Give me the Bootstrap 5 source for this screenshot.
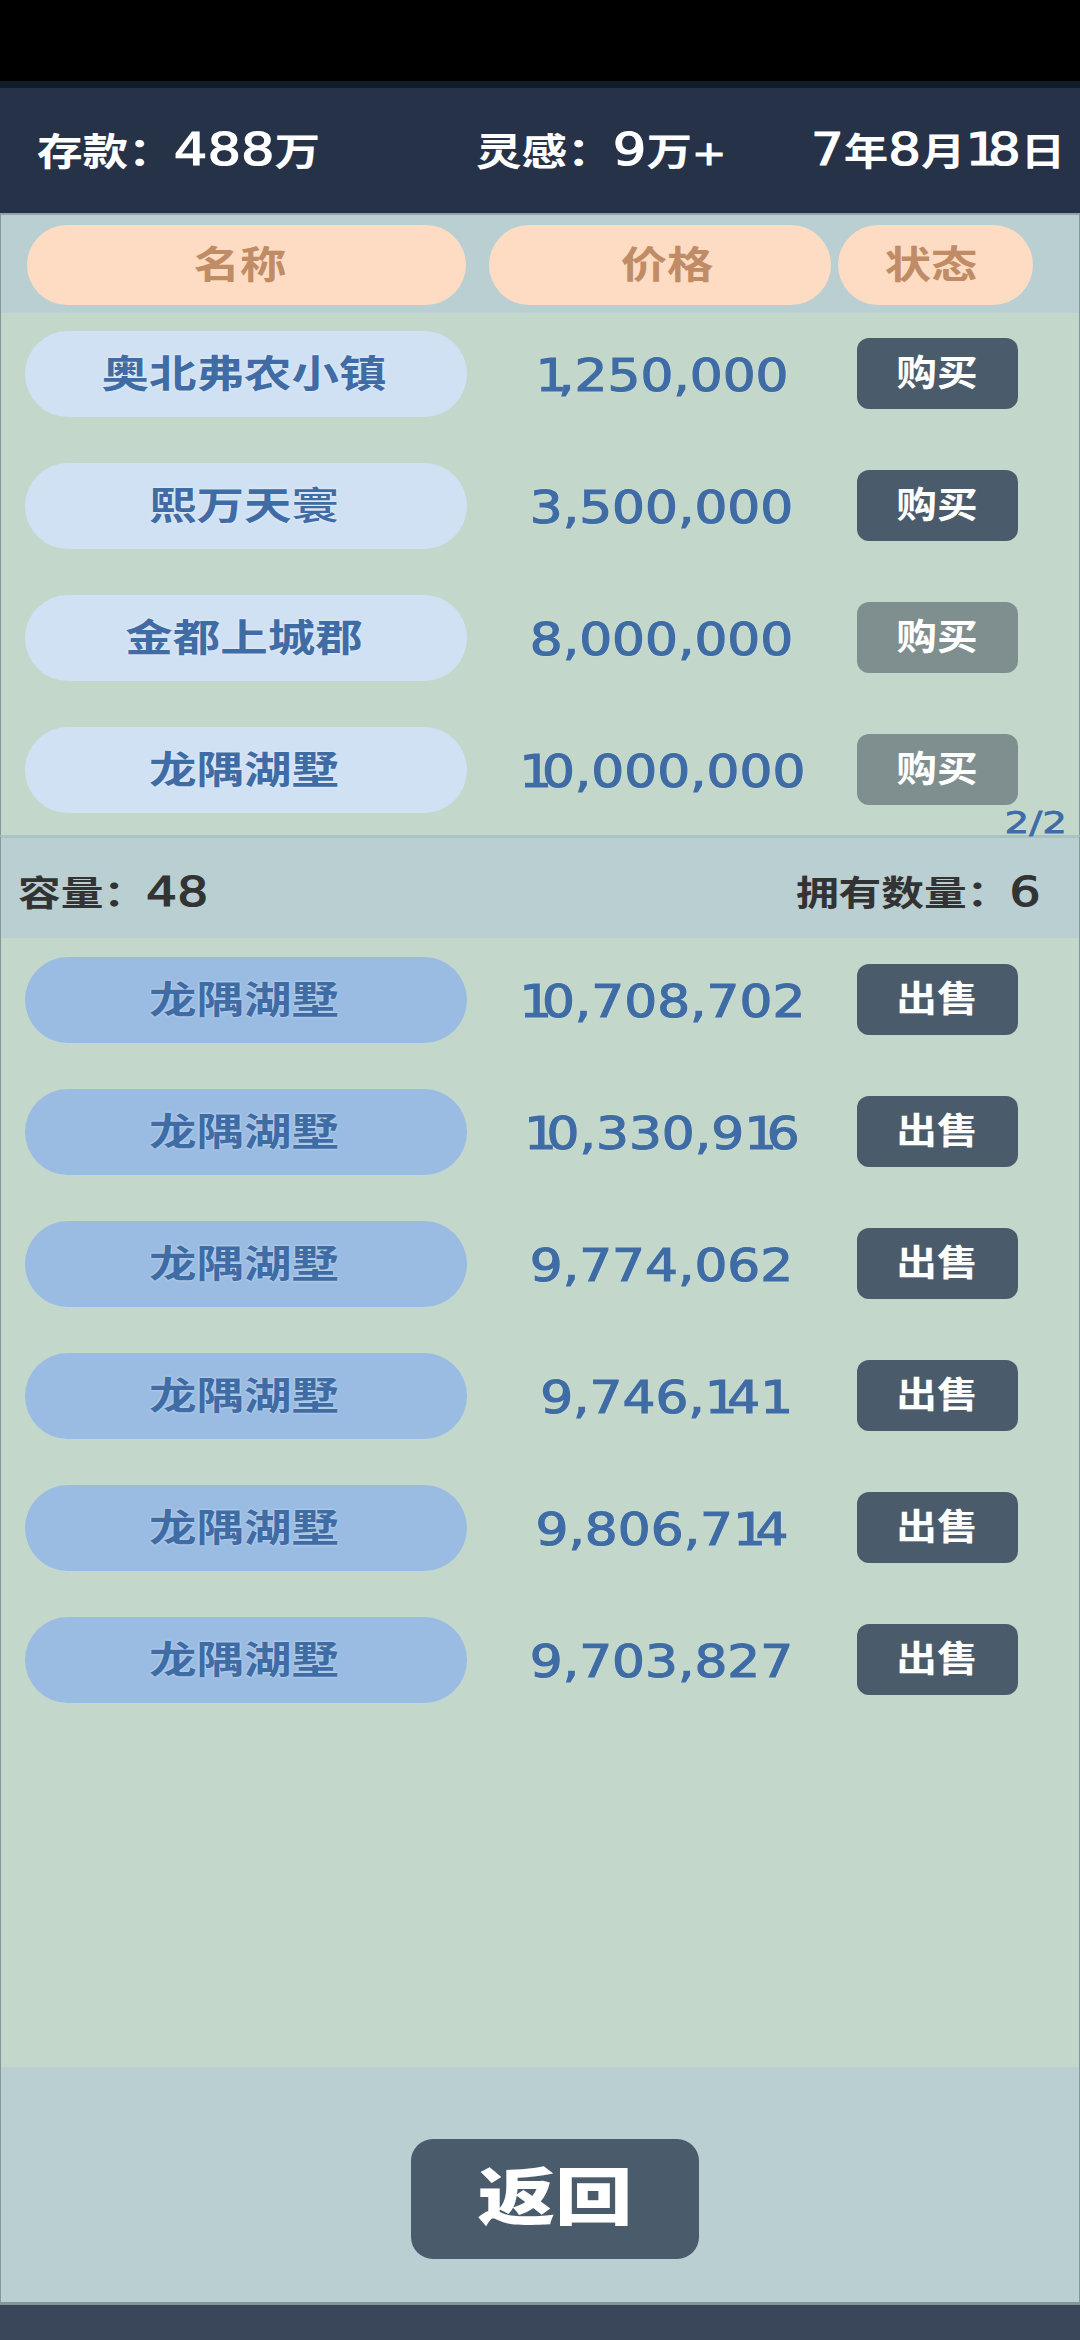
<!DOCTYPE html>
<html lang="zh">
<head>
<meta charset="UTF-8">
<title>房产</title>
<link href="https://cdn.jsdelivr.net/npm/bootstrap@5.3.0/dist/css/bootstrap.min.css" rel="stylesheet">
<style>
html, body { background: #000; }
#app { width: 1080px; height: 2340px; font-family: "DejaVu Sans", "Noto Sans CJK SC", sans-serif; font-weight: 700; overflow: hidden; }
.top-black { height: 81px; background: #000; }
.top-bar { height: 132px; background: #263248; color: #fff; border-top: 7px solid #0f1d2a; padding-top: 40px; }
.top-bar .wide { transform: scaleX(1.2); }
.top-bar .cell-c .wide { transform: scaleX(1.17); }
.wide { display: inline-block; transform: scaleX(1.22); transform-origin: left center; white-space: nowrap; line-height: 1; }
.wide-c { transform-origin: center; }
.num { font-weight: 400; font-size: 44px; -webkit-text-stroke: 1.2px currentColor; }
.plus { font-size: 34px; }
.hz { font-size: 38px; }
.one { letter-spacing: -.2em; }
.cell-a { width: 476px; padding-left: 37px; }
.cell-b { width: 335px; }
.cell-c { flex: 1; }
.head-strip { height: 100px; background: #b9cfd2; padding: 10px 0 0 26px; gap: 23px; border: 1px solid #7f9a9a; border-top: 2px solid #8fa5a8; border-bottom: 0; }
.head-pill { height: 80px; background: #fddcc3; color: #c08c66; border-radius: 40px; font-size: 38px; }
.head-pill .wide { transform: scaleX(1.22); }
.hp1 { width: 439px; padding-right: 12px; }
.hp2 { width: 342px; margin-right: -16px; padding-left: 14px; }
.hp3 { width: 195px; padding-right: 8px; }
.list-box { background: #c3d7cb; position: relative; border-left: 1px solid #7f9a9a; border-right: 1px solid #7f9a9a; }
.list-a { height: 522px; padding-top: 18px; }
.list-b { height: 1129px; padding-top: 19px; }
.item-row { height: 132px; padding-left: 24px; }
.name-pill { width: 442px; height: 86px; border-radius: 43px; color: #3f6ca5; font-size: 38px; padding-right: 4px; text-shadow: 0 0 2px rgba(255,255,255,.7); }
.name-pill .wide { transform: scaleX(1.25); }
.pill-new { background: #d1e1f4; }
.pill-own { background: #9abce2; }
.price { width: 390px; padding-top: 22px; text-align: center; color: #3f6ca5; text-shadow: 0 0 2px rgba(255,255,255,.7); }
.price .wide { font-size: 45px; font-weight: 400; -webkit-text-stroke: 1.2px #3f6ca5; transform: scaleX(1.15); transform-origin: center; }
.act-btn { width: 161px; height: 71px; margin-top: 7px; --bs-btn-bg: #4a5b6b; --bs-btn-border-width: 0; --bs-btn-color: #fff; --bs-btn-border-radius: 12px; --bs-btn-padding-x: 0; --bs-btn-padding-y: 0; --bs-btn-font-weight: 700; --bs-btn-disabled-bg: #7f8f8f; --bs-btn-disabled-color: #fff; --bs-btn-disabled-opacity: 1; font-size: 36px; font-family: inherit; }
.act-btn .wide { transform: scaleX(1.13); }
.page-no { position: absolute; right: 12px; bottom: -3px; color: #3f6ca5; font-size: 31px; font-weight: 400; line-height: 1; text-shadow: 0 0 2px rgba(255,255,255,.7); -webkit-text-stroke: .8px #3f6ca5; transform: scaleX(1.25); transform-origin: right center; }
.mid-strip { height: 103px; background: #b9cfd2; color: #333; border-top: 3px solid #a9c2c2; padding: 8px 39px 0 17px; border-left: 1px solid #7f9a9a; border-right: 1px solid #7f9a9a; }
.mid-strip .wide { transform: scaleX(1.22); }
.mid-strip .hz { font-size: 35px; }
.mid-strip .num { font-size: 40px; }
.mid-strip .mid-right { transform-origin: right center; }
.foot-strip { height: 238px; background: #b9cfd2; padding-top: 72px; border-left: 1px solid #7f9a9a; border-right: 1px solid #7f9a9a; border-bottom: 3px solid #83979a; }
.back-btn { width: 288px; height: 120px; --bs-btn-bg: #4a5b6b; --bs-btn-border-width: 0; --bs-btn-color: #fff; --bs-btn-border-radius: 22px; --bs-btn-padding-x: 0; --bs-btn-padding-y: 0; font-size: 62px; font-weight: 900; font-family: inherit; margin-left: 410px; line-height: 1; }
.back-btn .wide { transform: scaleX(1.25); }
.foot-dark { height: 35px; background: #3a4659; }
.thin { font-weight: 500; }
</style>
</head>
<body class="m-0">
<div id="app">
  <div class="top-black"></div>

  <div class="top-bar d-flex">
    <div class="cell-a"><span class="wide"><span class="hz">存款：</span><span class="num">488</span><span class="hz">万</span></span></div>
    <div class="cell-b"><span class="wide"><span class="hz">灵感：</span><span class="num">9</span><span class="hz">万</span><span class="num plus">+</span></span></div>
    <div class="cell-c"><span class="wide"><span class="num">7</span><span class="hz">年</span><span class="num">8</span><span class="hz">月</span><span class="num"><span class="one">1</span>8</span><span class="hz">日</span></span></div>
  </div>

  <div class="head-strip d-flex">
    <div class="head-pill hp1 d-flex align-items-center justify-content-center"><span class="wide wide-c">名称</span></div>
    <div class="head-pill hp2 d-flex align-items-center justify-content-center"><span class="wide wide-c">价格</span></div>
    <div class="head-pill hp3 d-flex align-items-center justify-content-center"><span class="wide wide-c">状态</span></div>
  </div>

  <div class="list-box list-a">
    <div class="item-row d-flex">
      <div class="name-pill pill-new d-flex align-items-center justify-content-center"><span class="wide wide-c">奥北弗农小镇</span></div>
      <div class="price"><span class="wide"><span class="one">1</span>,250,000</span></div>
      <div><button class="btn act-btn" type="button"><span class="wide wide-c">购买</span></button></div>
    </div>
    <div class="item-row d-flex">
      <div class="name-pill pill-new d-flex align-items-center justify-content-center"><span class="wide wide-c">熙万天<span class="thin">寰</span></span></div>
      <div class="price"><span class="wide">3,500,000</span></div>
      <div><button class="btn act-btn" type="button"><span class="wide wide-c">购买</span></button></div>
    </div>
    <div class="item-row d-flex">
      <div class="name-pill pill-new d-flex align-items-center justify-content-center"><span class="wide wide-c">金都上城郡</span></div>
      <div class="price"><span class="wide">8,000,000</span></div>
      <div><button class="btn act-btn" type="button" disabled><span class="wide wide-c">购买</span></button></div>
    </div>
    <div class="item-row d-flex">
      <div class="name-pill pill-new d-flex align-items-center justify-content-center"><span class="wide wide-c">龙隅湖墅</span></div>
      <div class="price"><span class="wide"><span class="one">1</span>0,000,000</span></div>
      <div><button class="btn act-btn" type="button" disabled><span class="wide wide-c">购买</span></button></div>
    </div>
    <div class="page-no">2/2</div>
  </div>

  <div class="mid-strip d-flex align-items-center justify-content-between">
    <span class="wide"><span class="hz">容量：</span><span class="num">48</span></span>
    <span class="wide mid-right"><span class="hz">拥有数量：</span><span class="num">6</span></span>
  </div>

  <div class="list-box list-b">
    <div class="item-row d-flex">
      <div class="name-pill pill-own d-flex align-items-center justify-content-center"><span class="wide wide-c">龙隅湖墅</span></div>
      <div class="price"><span class="wide"><span class="one">1</span>0,708,702</span></div>
      <div><button class="btn act-btn" type="button"><span class="wide wide-c">出售</span></button></div>
    </div>
    <div class="item-row d-flex">
      <div class="name-pill pill-own d-flex align-items-center justify-content-center"><span class="wide wide-c">龙隅湖墅</span></div>
      <div class="price"><span class="wide"><span class="one">1</span>0,330,9<span class="one">1</span>6</span></div>
      <div><button class="btn act-btn" type="button"><span class="wide wide-c">出售</span></button></div>
    </div>
    <div class="item-row d-flex">
      <div class="name-pill pill-own d-flex align-items-center justify-content-center"><span class="wide wide-c">龙隅湖墅</span></div>
      <div class="price"><span class="wide">9,774,062</span></div>
      <div><button class="btn act-btn" type="button"><span class="wide wide-c">出售</span></button></div>
    </div>
    <div class="item-row d-flex">
      <div class="name-pill pill-own d-flex align-items-center justify-content-center"><span class="wide wide-c">龙隅湖墅</span></div>
      <div class="price"><span class="wide">9,746,<span class="one">1</span>4<span class="one">1</span></span></div>
      <div><button class="btn act-btn" type="button"><span class="wide wide-c">出售</span></button></div>
    </div>
    <div class="item-row d-flex">
      <div class="name-pill pill-own d-flex align-items-center justify-content-center"><span class="wide wide-c">龙隅湖墅</span></div>
      <div class="price"><span class="wide">9,806,7<span class="one">1</span>4</span></div>
      <div><button class="btn act-btn" type="button"><span class="wide wide-c">出售</span></button></div>
    </div>
    <div class="item-row d-flex">
      <div class="name-pill pill-own d-flex align-items-center justify-content-center"><span class="wide wide-c">龙隅湖墅</span></div>
      <div class="price"><span class="wide">9,703,827</span></div>
      <div><button class="btn act-btn" type="button"><span class="wide wide-c">出售</span></button></div>
    </div>
  </div>

  <div class="foot-strip">
    <button class="btn back-btn d-block" type="button"><span class="wide wide-c">返回</span></button>
  </div>
  <div class="foot-dark"></div>
</div>
<script src="https://cdn.jsdelivr.net/npm/bootstrap@5.3.0/dist/js/bootstrap.bundle.min.js"></script>
</body>
</html>
